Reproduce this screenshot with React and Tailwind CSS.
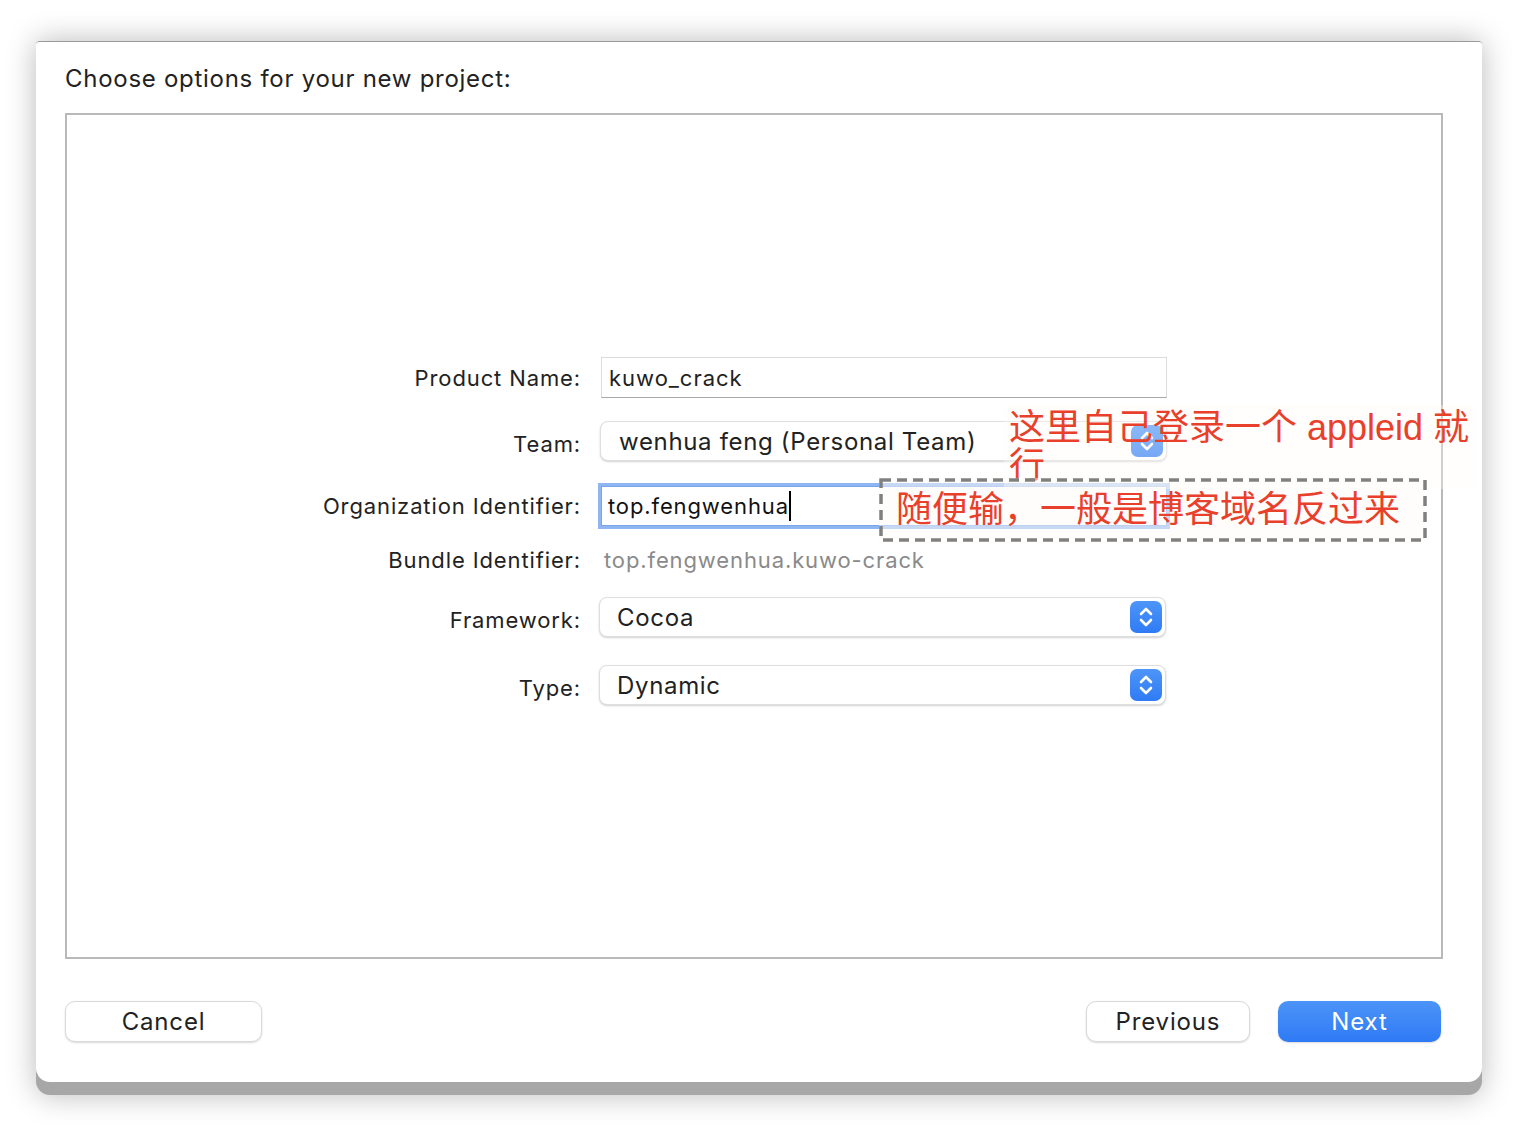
function Stepper() {
  return (
    <div className="w-[32px] h-[32px] rounded-[7px] bg-gradient-to-b from-[#4d95f8] to-[#2f7bf5] flex items-center justify-center shrink-0">
      <svg width="16" height="24" viewBox="0 0 16 24" fill="none" stroke="white" strokeWidth="2.6" strokeLinecap="round" strokeLinejoin="round">
        <path d="M3 9 L8 4 L13 9" />
        <path d="M3 15 L8 20 L13 15" />
      </svg>
    </div>
  );
}

function Popup({ text, textPad = "pl-[17px]" }) {
  return (
    <div className={`w-[567px] h-[40px] bg-white rounded-[8px] border border-[#dedede] shadow-[0_1px_2px_rgba(0,0,0,0.18)] flex items-center justify-between ${textPad} pr-[3px]`}>
      <span className="text-[24px] tracking-[0.028em] text-[#222] leading-none pt-[1px]">{text}</span>
      <Stepper />
    </div>
  );
}

function Label({ children, nudge = "" }) {
  return (
    <div className={`w-[533px] shrink-0 text-right pr-[19px] text-[22px] tracking-[0.04em] text-[#222] leading-none ${nudge}`}>
      {children}
    </div>
  );
}

const CJK = { fontFamily: '"Liberation Sans", "Noto Sans CJK SC", sans-serif' };

export default function App() {
  return (
    <div className="relative w-[1518px] h-[1132px] bg-white overflow-hidden" style={{ fontFamily: 'Inter, "Noto Sans", sans-serif' }}>
      <div className="pt-[41px] pl-[36px]">
        {/* Window */}
        <div className="w-[1446px] bg-[#a7a7a7] rounded-t-[4px] rounded-b-[14px] pb-[13px] shadow-[0_0_30px_rgba(0,0,0,0.28)] border-t border-[#9a9a9a]">
          <div className="bg-white rounded-t-[3px] rounded-b-[14px] pl-[29px] pr-[39px] pt-[23px] pb-[40px]">
            <div className="text-[24px] tracking-[0.03em] leading-[28px] text-[#222]">Choose options for your new project:</div>

            {/* Options box */}
            <div className="mt-[20px] h-[846px] border-2 border-[#b9b9b9] pt-[242px] flex flex-col">
              <div className="flex items-center h-[41px]">
                <Label>Product Name:</Label>
                <div className="w-[566px] h-[41px] ml-[1px] bg-white border border-[#dcdcdc] border-b-[#a8a8a8] flex items-center pl-[7px]">
                  <span className="text-[22px] tracking-[0.045em] text-[#222] leading-none">kuwo_crack</span>
                </div>
              </div>

              <div className="flex items-center h-[40px] mt-[23px]">
                <Label nudge="pt-[6px]">Team:</Label>
                <Popup text="wenhua feng (Personal Team)" textPad="pl-[18px]" />
              </div>

              <div className="flex items-center h-[40px] mt-[25px]">
                <Label>Organization Identifier:</Label>
                <div className="w-[566px] h-[40px] ml-[1px] bg-white border border-[#7aa5ea] shadow-[0_0_0_3px_#8fb5f2] flex items-center pl-[6px]">
                  <span className="text-[22px] tracking-[0.04em] text-[#111] leading-none">top.fengwenhua</span>
                  <span className="w-[2px] h-[30px] bg-black" />
                </div>
              </div>

              <div className="flex items-center h-[30px] mt-[19px]">
                <Label>Bundle Identifier:</Label>
                <span className="text-[22px] tracking-[0.04em] text-[#8a8a8a] leading-none pl-[4px]">top.fengwenhua.kuwo-crack</span>
              </div>

              <div className="flex items-center h-[40px] mt-[22px]">
                <Label nudge="pt-[5px]">Framework:</Label>
                <div className="-ml-[1px]">
                  <Popup text="Cocoa" />
                </div>
              </div>

              <div className="flex items-center h-[40px] mt-[28px]">
                <Label nudge="pt-[5px]">Type:</Label>
                <div className="-ml-[1px]">
                  <Popup text="Dynamic" />
                </div>
              </div>
            </div>

            {/* Buttons */}
            <div className="mt-[42px] flex items-center h-[41px] text-[24px] tracking-[0.035em]">
              <button className="w-[197px] h-[41px] bg-white rounded-[10px] border border-[#dadada] shadow-[0_1px_2px_rgba(0,0,0,0.15)] text-[#222]">Cancel</button>
              <div className="flex-1" />
              <button className="w-[164px] h-[41px] bg-white rounded-[10px] border border-[#dadada] shadow-[0_1px_2px_rgba(0,0,0,0.15)] text-[#222]">Previous</button>
              <button className="ml-[28px] mr-[2px] w-[163px] h-[41px] rounded-[10px] bg-gradient-to-b from-[#4c94f8] to-[#2e7af5] shadow-[0_1px_2px_rgba(0,0,0,0.15)] text-white">Next</button>
            </div>
          </div>
        </div>
      </div>

      {/* Annotation: team */}
      <div className="absolute left-[1004px] top-[405px] w-[472px] h-[84px] bg-[#fffbf7]/35 text-[#e8402b] text-[36px] leading-[38px] pl-[5px] pt-[4px] whitespace-nowrap" style={CJK}>
        这里自己登录一个 appleid 就<br />行
      </div>

      {/* Annotation: org identifier */}
      <div className="absolute left-[879px] top-[478px] w-[548px] h-[64px] bg-[#fffbf7]/50 flex items-center pl-[17px] text-[#e8402b] text-[36px] leading-none" style={CJK}>
        <svg className="absolute inset-0" width="548" height="64" viewBox="0 0 548 64" fill="none">
          <rect x="2" y="2" width="544" height="60" stroke="#808080" strokeWidth="3.5" strokeDasharray="10 6" />
        </svg>
        <span className="relative">随便输，一般是博客域名反过来</span>
      </div>
    </div>
  );
}
